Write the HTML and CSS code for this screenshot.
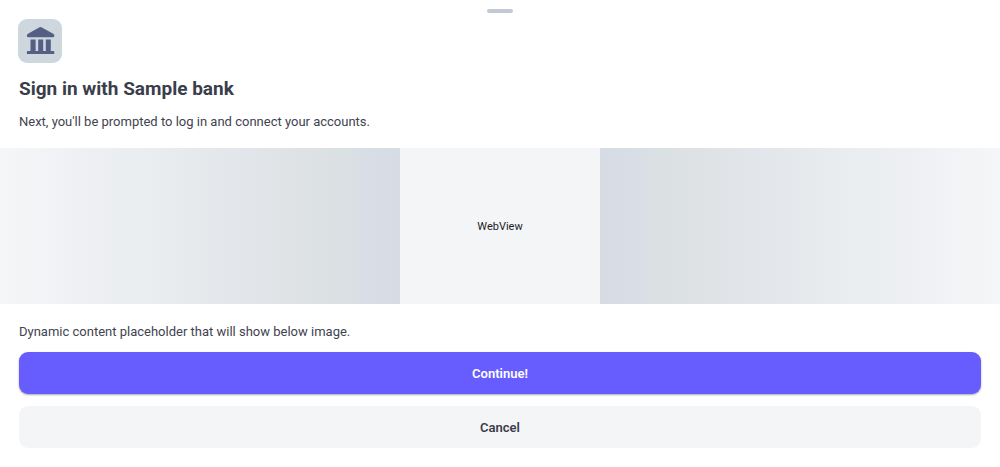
FILE: index.html
```html
<!DOCTYPE html>
<html lang="en">
<head>
<meta charset="utf-8">
<meta name="viewport" content="width=device-width, initial-scale=1">
<title>Sign in with Sample bank</title>
<link rel="stylesheet" href="styles.css">
</head>
<body>
<main class="sheet">
  <div class="handle"></div>
  <header class="intro">
    <div class="bank-icon">
      <svg viewBox="0 0 44 44" width="44" height="44" fill="currentColor" aria-hidden="true">
        <path d="M21.6 8.3Q22.5 7.8 23.4 8.3L35.2 14.7Q36.3 15.4 36.3 16.5V17.1Q36.3 18.2 35.2 18.2H10Q8.9 18.2 8.9 17.1V16.5Q8.9 15.4 10 14.7Z"/>
        <path d="M12.5 20.6H17.6V32H20.2V20.6H25.2V32H27.8V20.6H32.8V32H35.3Q36.3 32 36.3 33V35H8.9V33Q8.9 32 9.9 32H12.5Z"/>
      </svg>
    </div>
    <h1 class="title">Sign in with Sample bank</h1>
    <p class="text">Next, you'll be prompted to log in and connect your accounts.</p>
  </header>
  <section class="preview">
    <div class="fade fade-left"></div>
    <div class="webview">WebView</div>
    <div class="fade fade-right"></div>
  </section>
  <footer class="actions">
    <p class="text">Dynamic content placeholder that will show below image.</p>
    <button class="button primary" type="button">Continue!</button>
    <button class="button secondary" type="button">Cancel</button>
  </footer>
</main>
</body>
</html>
```
FILE: styles.css
```css
* {
  box-sizing: border-box;
}

body {
  margin: 0;
  background: #fff;
  color: #3f4350;
  font-family: Roboto, "Liberation Sans", sans-serif;
}

.sheet {
  display: flex;
  flex-direction: column;
  padding-top: 9px;
}

.handle {
  align-self: center;
  width: 26px;
  height: 4px;
  border-radius: 2px;
  background: #c1c9d2;
}

.intro {
  padding: 6px 19px 16px 18px;
}

.bank-icon {
  width: 44px;
  height: 44px;
  border-radius: 9px;
  background: #ced7de;
  color: #545f83;
}

.bank-icon svg {
  display: block;
}

.title {
  margin: 14px 0 11px;
  padding-left: 1px;
  color: #3a3e4b;
  font-size: 19px;
  line-height: 24px;
  font-weight: 700;
}

.text {
  margin: 0;
  padding-left: 1px;
  font-size: 13px;
  line-height: 20px;
}

.preview {
  display: grid;
  grid-template-columns: 2fr 1fr 2fr;
  height: 156px;
  background: #f4f5f7;
}

.fade {
  background-image: linear-gradient(var(--direction), #f5f6f7 0%, #f2f3f6 12%, #eeeff2 23%, #eaeef0 34%, #e6eaed 48%, #e2e5e9 61%, #dfe3e6 72%, #dbe0e3 86%, #d9dee6 91%, #d6dbe4 100%);
}

.fade-left {
  --direction: to right;
}

.fade-right {
  --direction: to left;
}

.webview {
  display: flex;
  align-items: center;
  justify-content: center;
  color: #1b1c1e;
  font-size: 11px;
}

.actions {
  display: flex;
  flex-direction: column;
  padding: 18px 19px 19px;
}

.actions .text {
  padding-left: 0;
  margin-bottom: 10px;
}

.button {
  height: 42px;
  padding: 0;
  border: 0;
  border-radius: 9px;
  font-family: inherit;
  font-size: 13px;
  font-weight: 600;
}

.primary {
  margin-bottom: 12px;
  background: #675dff;
  color: #fff;
  box-shadow: 0 1px 2px rgba(40, 40, 70, 0.4);
}

.secondary {
  background: #f4f5f7;
  color: #3a3e4b;
}
```
